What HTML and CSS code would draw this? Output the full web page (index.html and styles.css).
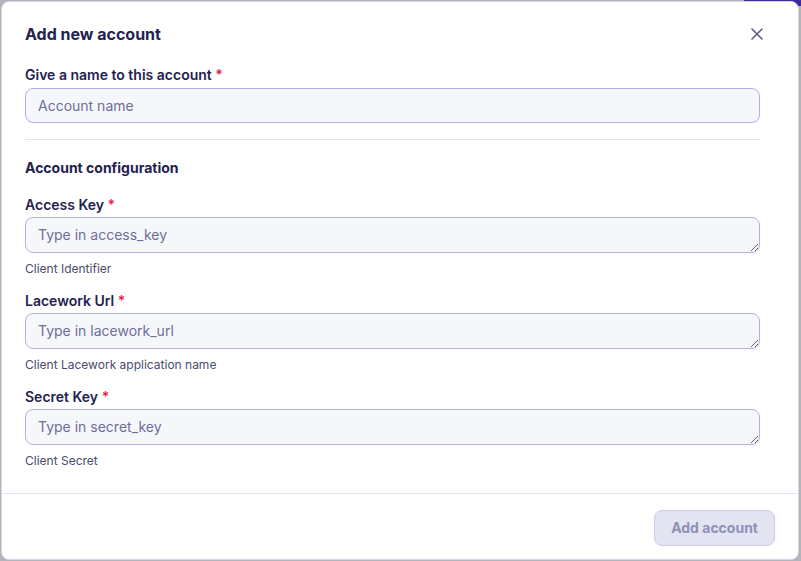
FILE: index.html
```html
<!DOCTYPE html>
<html lang="en">
<head>
<meta charset="utf-8">
<title>Add new account</title>
<link rel="stylesheet" href="styles.css">
</head>
<body>
<div class="app-accent"></div>
<div class="modal" role="dialog" aria-labelledby="modal-title">
  <div class="modal-body">
    <header class="modal-header">
      <h2 id="modal-title" class="modal-title">Add new account</h2>
      <button class="close-btn" aria-label="Close">
        <svg width="12" height="12" viewBox="0 0 12 12" fill="none" stroke="currentColor" stroke-width="1.6" stroke-linecap="round"><path d="M1 1L11 11M11 1L1 11"/></svg>
      </button>
    </header>

    <div class="field field-first">
      <label class="label">Give a name to this account <span class="req">*</span></label>
      <input class="input" type="text" placeholder="Account name">
    </div>

    <hr class="divider">

    <h3 class="section-title">Account configuration</h3>

    <div class="field">
      <label class="label">Access Key <span class="req">*</span></label>
      <textarea class="input textarea" placeholder="Type in access_key"></textarea>
      <p class="help">Client Identifier</p>
    </div>

    <div class="field">
      <label class="label">Lacework Url <span class="req">*</span></label>
      <textarea class="input textarea" placeholder="Type in lacework_url"></textarea>
      <p class="help">Client Lacework application name</p>
    </div>

    <div class="field">
      <label class="label">Secret Key <span class="req">*</span></label>
      <textarea class="input textarea" placeholder="Type in secret_key"></textarea>
      <p class="help">Client Secret</p>
    </div>
  </div>
  <footer class="modal-footer">
    <button class="btn-primary" disabled>Add account</button>
  </footer>
</div>
</body>
</html>
```

FILE: styles.css
```css
* { box-sizing: border-box; }
html, body { margin: 0; height: 100%; }
body {
  background: #b3b3bb;
  padding: 1px 2px 1px 1px;
  font-family: Inter, "Noto Sans", sans-serif;
  color: #23224f;
  overflow: hidden;
  position: relative;
}
.app-accent {
  position: absolute;
  top: 0;
  right: 0;
  width: 57px;
  height: 6px;
  background: #3a2b9e;
}
.modal {
  position: relative;
  height: 559px;
  background: #fff;
  border: 1px solid #d6d6e4;
  border-radius: 8px;
  display: flex;
  flex-direction: column;
}
.modal-body {
  flex: 1;
  padding: 20px 38px 0 23px;
}
.modal-header {
  display: flex;
  align-items: center;
  justify-content: space-between;
  height: 24px;
  margin-bottom: 19px;
}
.modal-title {
  margin: 0;
  font-size: 16px;
  font-weight: 700;
  line-height: 24px;
  color: #23224f;
}
.close-btn {
  border: 0;
  background: none;
  padding: 0;
  margin-right: -3px;
  width: 12px;
  height: 12px;
  color: #5b5c85;
  display: flex;
}
.field { display: flex; flex-direction: column; }
.label {
  font-size: 14px;
  font-weight: 600;
  line-height: 20px;
  margin-bottom: 2px;
  color: #23224f;
}
.field-first .label { margin-bottom: 3px; }
.req { color: #e0244f; }
.input {
  display: block;
  width: 100%;
  height: 35px;
  border: 1px solid #b1aee6;
  border-radius: 8px;
  background: #f6f7fb;
  padding: 0 12px;
  font-family: inherit;
  font-size: 14px;
  color: #23224f;
  outline: none;
}
.input::placeholder { color: #6f6e98; }
.textarea {
  height: 36px;
  padding: 7px 12px;
  line-height: 20px;
  resize: vertical;
}
.help {
  margin: 8px 0 14px;
  font-size: 12px;
  line-height: 16px;
  color: #4b4b6e;
}
.divider {
  border: 0;
  border-top: 1px solid #e2e2ea;
  margin: 16px 0 18px;
}
.section-title {
  margin: 0 0 17px;
  font-size: 14px;
  font-weight: 700;
  line-height: 20px;
  color: #23224f;
}
.modal-footer {
  border-top: 1px solid #e2e2ea;
  padding: 16px 23px 0 0;
  height: 66px;
  display: flex;
  justify-content: flex-end;
  align-items: flex-start;
}
.btn-primary {
  height: 36px;
  padding: 0 16px 1px;
  border: 1px solid #c9cbe2;
  border-radius: 8px;
  background: #e3e4f1;
  color: #8e91b8;
  font-family: inherit;
  font-size: 14px;
  font-weight: 700;
}
```
